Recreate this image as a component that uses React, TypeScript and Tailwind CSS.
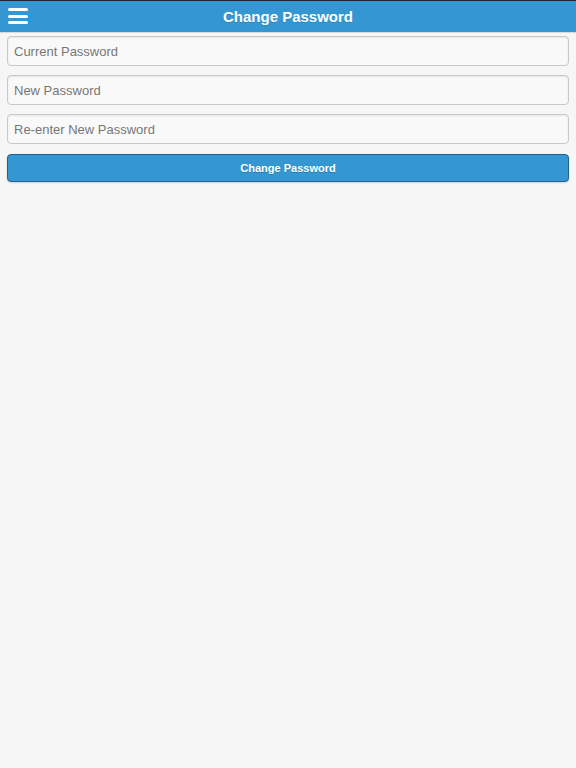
import React from 'react';

// ─── Header ───────────────────────────────────────────────────────────────────

function Header() {
  return (
    <header className="relative flex h-[33px] items-center justify-center border-t border-t-[#1c2733] border-b border-b-[#d9d9d9] bg-[#3497d1]">
      <button className="absolute left-[8px] top-[5px] flex h-[20px] w-[20px] flex-col justify-between py-[2px]" aria-label="Menu">
        <span className="block h-[3px] w-full rounded-sm bg-white" />
        <span className="block h-[3px] w-full rounded-sm bg-white" />
        <span className="block h-[3px] w-full rounded-sm bg-white" />
      </button>
      <h1 className="pt-[1px] text-[15px] font-bold text-white [text-shadow:0_1px_0_rgba(0,0,0,0.15)]">Change Password</h1>
    </header>
  );
}

// ─── Field ────────────────────────────────────────────────────────────────────

function Field({ placeholder }: { placeholder: string }) {
  return (
    <input
      type="password"
      placeholder={placeholder}
      className="h-[30px] w-full rounded-[4px] border border-[#c8c8c8] bg-[#f9f9f9] px-[6px] text-[13px] text-[#333] shadow-[inset_0_1px_2px_rgba(0,0,0,0.08)] outline-none placeholder:text-[#777]"
    />
  );
}

// ─── Page ─────────────────────────────────────────────────────────────────────

export default function App() {
  return (
    <div className="min-h-[768px] bg-[#f6f6f6] font-['Liberation_Sans',Arial,sans-serif]">
      <Header />
      <form className="flex flex-col gap-[9px] px-[7px] pt-[3px]" onSubmit={(e) => e.preventDefault()}>
        <Field placeholder="Current Password" />
        <Field placeholder="New Password" />
        <div className="mb-[1px]">
          <Field placeholder="Re-enter New Password" />
        </div>
        <button
          type="submit"
          className="h-[28px] w-full rounded-[4px] border border-[#24608a] bg-[#3497d1] text-[11px] font-bold text-white shadow-[0_1px_2px_rgba(0,0,0,0.15)] [text-shadow:0_1px_0_rgba(0,0,0,0.2)]"
        >
          Change Password
        </button>
      </form>
    </div>
  );
}
